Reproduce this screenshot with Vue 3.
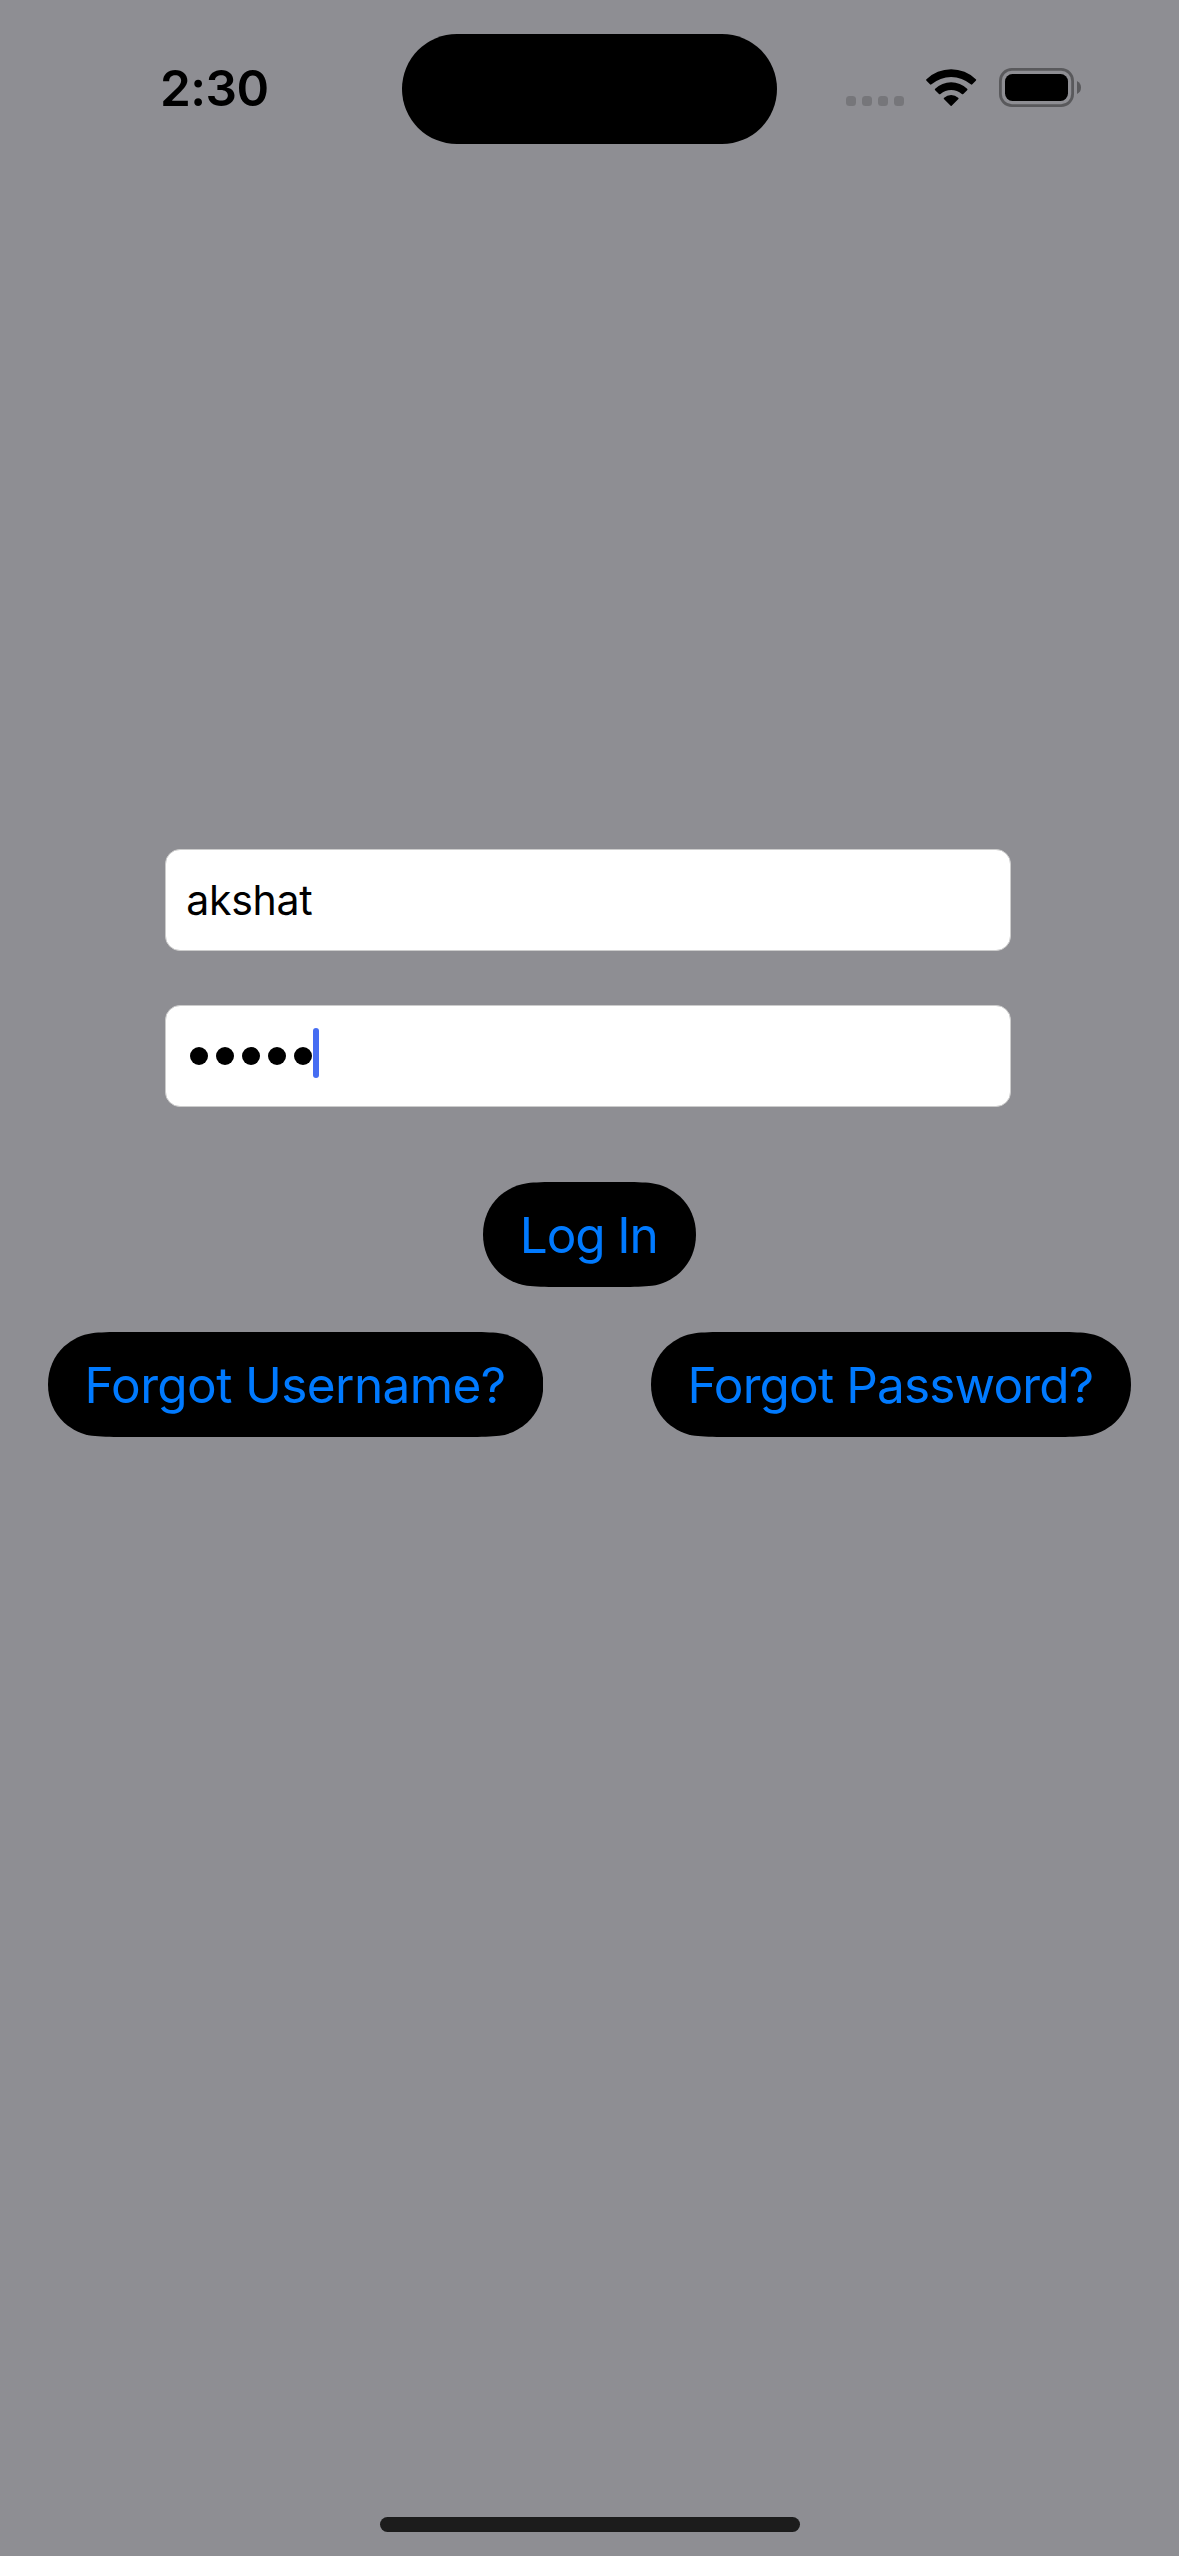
<script setup>
const PILL_HEIGHT = 105

// Continuous-corner capsule outline for a button of the given width
function pill(w) {
  const h = PILL_HEIGHT
  const m = h / 2
  return (
    `path("M0 ${m}C0 37 6 24 16 14.5C24.500 7 34 2.500 44 1.200C52 .2 62 0 75 0` +
    `L${w - 75} 0C${w - 62} 0 ${w - 52} .2 ${w - 44} 1.200C${w - 34} 2.500 ${w - 24.5} 7 ${w - 16} 14.5C${w - 6} 24 ${w} 37 ${w} ${m}` +
    `C${w} ${h - 37} ${w - 6} ${h - 24} ${w - 16} ${h - 14.5}C${w - 24.5} ${h - 7} ${w - 34} ${h - 2.5} ${w - 44} ${h - 1.2}C${w - 52} ${h - 0.2} ${w - 62} ${h} ${w - 75} ${h}` +
    `L75 ${h}C62 ${h} 52 ${h - 0.2} 44 ${h - 1.2}C34 ${h - 2.5} 24.500 ${h - 7} 16 ${h - 14.5}C6 ${h - 24} 0 ${h - 37} 0 ${m}Z")`
  )
}

const pillStyle = (w) => ({ width: `${w}px`, clipPath: pill(w) })
</script>

<template>
  <main class="screen">
    <header class="status">
      <div class="time">2:30</div>
      <div class="island"></div>
      <div class="indicators">
        <div class="cell"><i v-for="n in 4" :key="n"></i></div>
        <svg class="wifi" viewBox="289 56 151 112">
          <path d="M290.5 91Q288 88.500 290.500 86.500A106 106 0 0 1 438.500 86.500Q441 88.500 438.500 91L428 102Q426 104 423.500 102A91 91 0 0 0 305.500 102Q303 104 301 102Z" />
          <path d="M316.500 119.500Q314 117 316.500 115A70 70 0 0 1 412.500 115Q415 117 412.500 119.500L401 131Q399 133 396.500 131A50 50 0 0 0 332.500 131Q330 133 328 131Z" />
          <path d="M343.500 147Q341 144.500 343.500 142.500A31 31 0 0 1 385.500 142.500Q388 144.500 385.500 147L366 166.500Q364.500 168 363 166.500Z" />
        </svg>
        <svg class="battery" viewBox="0 0 82 39">
          <rect x="1.400" y="1.400" width="72.200" height="36.200" rx="11.500" fill="none" stroke="#59595c" stroke-width="2.800" />
          <rect x="6" y="6" width="63" height="27" rx="7.500" />
          <path d="M78 13Q82 15 82 19.500T78 26Z" fill="#59595c" />
        </svg>
      </div>
    </header>

    <form class="login" @submit.prevent>
      <div class="field"><span class="value">akshat</span></div>
      <div class="field password">
        <b v-for="n in 5" :key="n"></b>
        <span class="caret"></span>
      </div>
      <button class="pill" :style="pillStyle(213)"><span class="log">Log In</span></button>
      <div class="links">
        <button class="pill" :style="pillStyle(495.4)"><span class="user">Forgot Username?</span></button>
        <button class="pill" :style="pillStyle(480)"><span class="pass">Forgot Password?</span></button>
      </div>
    </form>

    <div class="home"></div>
  </main>
</template>

<style>
body {
  background: #8e8e93;
}
</style>

<style scoped>
.screen {
  box-sizing: border-box;
  width: 1179px;
  height: 2556px;
  display: flex;
  flex-direction: column;
  background: #8e8e93;
  color: #000;
  font-family: Inter, "Liberation Sans", sans-serif;
  overflow: hidden;
}

.status {
  display: flex;
  align-items: flex-start;
  height: 849px;
  padding-top: 33.600px;
  box-sizing: border-box;
}

.time {
  width: 81.900px;
  margin-right: 160px;
  padding: 24.400px 0 0 160px;
  font-size: 49.500px;
  line-height: 60px;
  font-weight: 600;
  letter-spacing: -0.500px;
  white-space: nowrap;
}

.island {
  flex: none;
  width: 375.600px;
  height: 110.700px;
  border-radius: 56px;
  background: #000;
}

.indicators {
  display: flex;
  align-items: flex-end;
  height: 73.400px;
  margin-left: 68.500px;
}

.cell {
  display: flex;
  gap: 6px;
  margin-bottom: 1px;
}

.cell i {
  width: 10px;
  height: 10px;
  border-radius: 3.500px;
  background: #76767a;
}

.wifi {
  width: 50.300px;
  height: 37.300px;
  margin: 0 22.500px 1px 22.300px;
}

.battery {
  width: 82px;
  height: 39px;
}

.login {
  display: flex;
  flex-direction: column;
  align-items: center;
}

.field {
  box-sizing: border-box;
  width: 845.400px;
  height: 102px;
  margin-right: 3px;
  padding-left: 20px;
  display: flex;
  align-items: center;
  border: 1px solid #ccc;
  border-radius: 15px;
  background: #fff;
  font-size: 41px;
  letter-spacing: -0.300px;
}

.password {
  margin-top: 54px;
  margin-bottom: 75px;
  padding-left: 24px;
  gap: 8px;
}

.password b {
  width: 18px;
  height: 18px;
  border-radius: 50%;
  background: #000;
}

.caret {
  width: 6px;
  height: 50px;
  margin: -6px 0 0 -7px;
  border-radius: 3px;
  background: #466df2;
}

.pill {
  flex: none;
  height: 105px;
  padding: 0;
  border: 0;
  background: #000;
  color: #007aff;
  font: 400 49.500px/60px Inter, "Liberation Sans", sans-serif;
  white-space: nowrap;
}

.pill span {
  margin-right: 1.500px;
}

.log {
  letter-spacing: -1.100px;
}

.user {
  letter-spacing: -0.600px;
}

.pass {
  letter-spacing: -0.850px;
}

.links {
  display: flex;
  justify-content: space-between;
  width: 1083px;
  margin-top: 45px;
}

.home {
  flex: none;
  width: 420px;
  height: 15px;
  margin: auto auto 24px 380px;
  border-radius: 8px;
  background: #1c1c1c;
}
</style>
